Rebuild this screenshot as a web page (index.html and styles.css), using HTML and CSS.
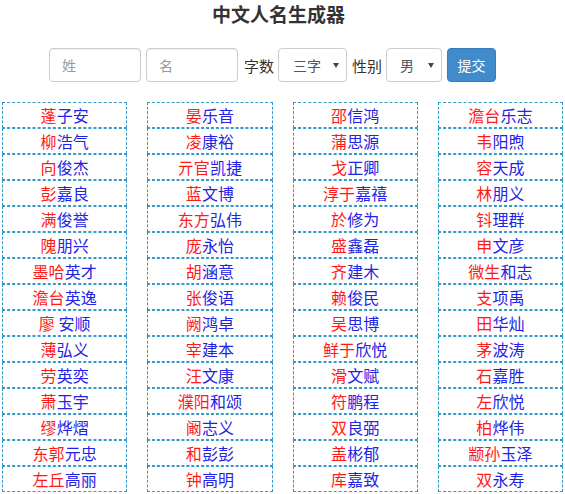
FILE: index.html
```html
<!DOCTYPE html>
<html lang="zh">
<head>
<meta charset="utf-8">
<title>中文人名生成器</title>
<link rel="stylesheet" href="styles.css">
</head>
<body>
<h1 class="title">中文人名生成器</h1>
<form class="form">
  <input class="field" type="text" placeholder="姓">
  <input class="field" type="text" placeholder="名">
  <span class="label">字数</span>
  <div class="select select-count"><span>三字</span><i class="caret"></i></div>
  <span class="label">性别</span>
  <div class="select select-sex"><span>男</span><i class="caret"></i></div>
  <button class="btn" type="button">提交</button>
</form>
<div class="grid">
  <ul class="col">
    <li><b>蓬</b>子安</li>
    <li><b>柳</b>浩气</li>
    <li><b>向</b>俊杰</li>
    <li><b>彭</b>嘉良</li>
    <li><b>满</b>俊誉</li>
    <li><b>隗</b>朋兴</li>
    <li><b>墨哈</b>英才</li>
    <li><b>澹台</b>英逸</li>
    <li><b>廖</b> 安顺</li>
    <li><b>薄</b>弘义</li>
    <li><b>劳</b>英奕</li>
    <li><b>萧</b>玉宇</li>
    <li><b>缪</b>烨熠</li>
    <li><b>东郭</b>元忠</li>
    <li><b>左丘</b>高丽</li>
  </ul>
  <ul class="col">
    <li><b>晏</b>乐音</li>
    <li><b>凌</b>康裕</li>
    <li><b>亓官</b>凯捷</li>
    <li><b>蓝</b>文博</li>
    <li><b>东方</b>弘伟</li>
    <li><b>庞</b>永怡</li>
    <li><b>胡</b>涵意</li>
    <li><b>张</b>俊语</li>
    <li><b>阙</b>鸿卓</li>
    <li><b>宰</b>建本</li>
    <li><b>汪</b>文康</li>
    <li><b>濮阳</b>和颂</li>
    <li><b>阚</b>志义</li>
    <li><b>和</b>彭彭</li>
    <li><b>钟</b>高明</li>
  </ul>
  <ul class="col">
    <li><b>邵</b>信鸿</li>
    <li><b>蒲</b>思源</li>
    <li><b>戈</b>正卿</li>
    <li><b>淳于</b>嘉禧</li>
    <li><b>於</b>修为</li>
    <li><b>盛</b>鑫磊</li>
    <li><b>齐</b>建木</li>
    <li><b>赖</b>俊民</li>
    <li><b>吴</b>思博</li>
    <li><b>鲜于</b>欣悦</li>
    <li><b>滑</b>文赋</li>
    <li><b>符</b>鹏程</li>
    <li><b>双</b>良弼</li>
    <li><b>盖</b>彬郁</li>
    <li><b>库</b>嘉致</li>
  </ul>
  <ul class="col">
    <li><b>澹台</b>乐志</li>
    <li><b>韦</b>阳煦</li>
    <li><b>容</b>天成</li>
    <li><b>林</b>朋义</li>
    <li><b>钭</b>理群</li>
    <li><b>申</b>文彦</li>
    <li><b>微生</b>和志</li>
    <li><b>支</b>项禹</li>
    <li><b>田</b>华灿</li>
    <li><b>茅</b>波涛</li>
    <li><b>石</b>嘉胜</li>
    <li><b>左</b>欣悦</li>
    <li><b>柏</b>烨伟</li>
    <li><b>颛孙</b>玉泽</li>
    <li><b>双</b>永寿</li>
  </ul>
</div>
</body>
</html>
```

FILE: styles.css
```css
* { box-sizing: border-box; }
html, body {
  margin: 0;
  padding: 0;
  background: #fff;
  font-family: "Noto Sans CJK SC", "Liberation Sans", sans-serif;
  color: #333;
  font-size: 14px;
}
.title {
  margin: 3px 0 0;
  padding-right: 8px;
  text-align: center;
  font-size: 19px;
  line-height: 22px;
  font-weight: bold;
  color: #333;
}
.form {
  display: flex;
  align-items: center;
  margin: 23px 0 0;
  padding-left: 49px;
  height: 34px;
}
.field {
  width: 92px;
  height: 34px;
  border: 1px solid #ccc;
  border-radius: 4px;
  padding: 6px 12px;
  font-family: inherit;
  font-size: 14px;
  color: #555;
  box-shadow: inset 0 1px 1px rgba(0,0,0,.075);
  margin-right: 5px;
}
.field::placeholder { color: #999; }
.label {
  font-size: 15px;
  color: #333;
  margin: 0 4px 0 1px;
}
.select {
  height: 34px;
  border: 1px solid #ccc;
  border-radius: 4px;
  display: flex;
  align-items: center;
  justify-content: space-between;
  font-size: 14px;
  color: #555;
  background: #fff;
  margin-right: 4px;
}
.select-count { width: 69px; padding: 0 7px 0 14px; }
.select-sex { width: 56px; padding: 0 7px 0 13px; }
.caret {
  width: 0;
  height: 0;
  border-left: 3px solid transparent;
  border-right: 3px solid transparent;
  border-top: 5px solid #444;
}
.btn {
  width: 49px;
  height: 34px;
  margin-left: 1px;
  border: 1px solid #357ebd;
  border-radius: 4px;
  background: #428bca;
  color: #fff;
  font-family: inherit;
  font-size: 14px;
  padding: 0;
}
.grid {
  display: grid;
  grid-template-columns: repeat(4, 1fr);
  column-gap: 20px;
  padding: 0 2px;
  margin-top: 20px;
}
.col {
  list-style: none;
  margin: 0;
  padding: 0;
}
.col li {
  height: 26px;
  border: 1px dashed #3399cc;
  text-align: center;
  font-size: 16px;
  line-height: 24px;
  color: #2323e6;
  white-space: pre;
}
.col li b {
  font-weight: normal;
  color: #ff1a1a;
}
```
